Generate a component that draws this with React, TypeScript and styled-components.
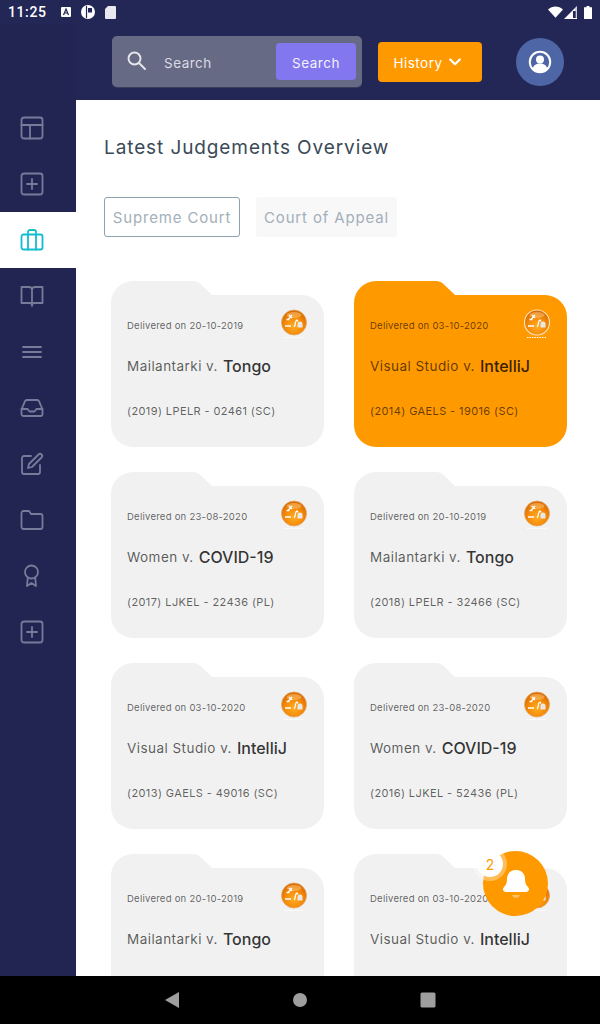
import React from "react";
import styled, { createGlobalStyle } from "styled-components";

const FONT = `Inter, "Open Sans", sans-serif`;

interface Judgement {
  date: string;
  left: string;
  right: string;
  ref?: string;
  active?: boolean;
}

const JUDGEMENTS: Judgement[] = [
  { date: "20-10-2019", left: "Mailantarki", right: "Tongo", ref: "(2019) LPELR - 02461 (SC)" },
  { date: "03-10-2020", left: "Visual Studio", right: "IntelliJ", ref: "(2014) GAELS - 19016 (SC)", active: true },
  { date: "23-08-2020", left: "Women", right: "COVID-19", ref: "(2017) LJKEL - 22436 (PL)" },
  { date: "20-10-2019", left: "Mailantarki", right: "Tongo", ref: "(2018) LPELR - 32466 (SC)" },
  { date: "03-10-2020", left: "Visual Studio", right: "IntelliJ", ref: "(2013) GAELS - 49016 (SC)" },
  { date: "23-08-2020", left: "Women", right: "COVID-19", ref: "(2016) LJKEL - 52436 (PL)" },
  { date: "20-10-2019", left: "Mailantarki", right: "Tongo" },
  { date: "03-10-2020", left: "Visual Studio", right: "IntelliJ" },
];

// Sidebar icons
const plusSquare = (
  <>
    <rect x="1.500" y="1.500" width="21" height="21" rx="2.500" />
    <path d="M12 7v10M7 12h10" />
  </>
);

const NAV_ICONS: React.ReactNode[] = [
  <>
    <rect x="1.500" y="1.500" width="21" height="21" rx="2.500" />
    <path d="M1.500 9h21M10 9v13.500" />
  </>,
  plusSquare,
  <>
    <rect x="1.500" y="6.500" width="21" height="15" rx="2" />
    <path d="M8 21.500V4a2 2 0 0 1 2-2h4a2 2 0 0 1 2 2v17.500" />
  </>,
  <path d="M12 6a3 3 0 0 0-3-3H1.500v16H10.500l1.500 1.500 1.500-1.500H22.500V3H15a3 3 0 0 0-3 3zM12 6v16" />,
  <path d="M3 7h18M3 12h18M3 17h18" />,
  <>
    <path d="M1.500 13.500 5 5.200A2 2 0 0 1 6.800 4h10.400A2 2 0 0 1 19 5.200l3.500 8.300V18a2 2 0 0 1-2 2H3.500a2 2 0 0 1-2-2z" />
    <path d="M1.500 13h6l2 2.500h5l2-2.500h6" />
  </>,
  <>
    <path d="M11 4H4a2 2 0 0 0-2 2v14a2 2 0 0 0 2 2h14a2 2 0 0 0 2-2v-7" />
    <path d="M18.500 2.500a2.121 2.121 0 0 1 3 3L12 15l-4 1 1-4z" />
  </>,
  <path d="M22.500 19a2 2 0 0 1-2 2H3.500a2 2 0 0 1-2-2V5a2 2 0 0 1 2-2h5.500l2 3h9.500a2 2 0 0 1 2 2z" />,
  <>
    <circle cx="11.500" cy="8" r="6.500" />
    <path d="M7.800 13.500 7 22l4.500-3 4.500 3-.8-8.500" />
  </>,
  plusSquare,
];

const ACTIVE_NAV = 2;

const GlobalStyle = createGlobalStyle`
  html, body {
    margin: 0;
    padding: 0;
    background: #fff;
  }
  * {
    box-sizing: border-box;
  }
`;

const Screen = styled.div`
  width: 600px;
  height: 1024px;
  display: flex;
  flex-direction: column;
  overflow: hidden;
  background: #232755;
  font-family: ${FONT};
`;

// Status bar
const StatusBar = styled.div`
  height: 24px;
  flex: none;
  display: flex;
  align-items: center;
  padding: 0 8px;
  color: #fff;
`;

const Clock = styled.span`
  font-family: Roboto, sans-serif;
  font-size: 14px;
  font-weight: 500;
  letter-spacing: 0.6px;
  margin-right: 14px;
`;

const StatusGroup = styled.div`
  display: flex;
  align-items: center;
  gap: 10px;
`;

const StatusRight = styled(StatusGroup)`
  margin-left: auto;
  gap: 1px;
`;

const SignalIcon = styled.svg`
  margin-right: 6px;
`;

// Body
const Body = styled.div`
  flex: 1;
  min-height: 0;
  display: flex;
`;

const Sidebar = styled.nav`
  width: 76px;
  flex: none;
  padding-top: 76px;
  background: #222552;
`;

const NavItem = styled.div<{ $active?: boolean }>`
  height: 56px;
  display: flex;
  align-items: center;
  padding-left: 20px;
  background: ${(p) => (p.$active ? "#fff" : "transparent")};
  color: ${(p) => (p.$active ? "#12bdd0" : "#777b9a")};

  & svg {
    width: 24px;
    height: 24px;
    fill: none;
    stroke: currentColor;
    stroke-width: 1.8;
    stroke-linecap: round;
    stroke-linejoin: round;
  }
`;

const Main = styled.div`
  flex: 1;
  min-width: 0;
  display: flex;
  flex-direction: column;
`;

// Header
const Header = styled.header`
  height: 76px;
  flex: none;
  display: flex;
  align-items: center;
  padding-left: 36px;
`;

const SearchBox = styled.div`
  width: 250px;
  height: 51px;
  margin-bottom: 1px;
  display: flex;
  align-items: center;
  padding: 0 6px 0 15px;
  border-radius: 5px;
  background: #676a85;
  box-shadow: 0 1px 0 #3a3c5c;
`;

const SearchGlyph = styled.svg`
  width: 19px;
  height: 19px;
  margin-top: -3px;
  fill: none;
  stroke: #e6e6ec;
  stroke-width: 1.9;
  stroke-linecap: round;
`;

const SearchLabel = styled.span`
  margin-left: 18px;
  padding-top: 2px;
  flex: 1;
  color: #dadbe3;
  font-size: 13.5px;
  letter-spacing: 0.5px;
`;

const SearchButton = styled.button`
  width: 80px;
  height: 37px;
  border: 0;
  padding: 2px 0 0;
  border-radius: 4px;
  background: #8277ee;
  color: #f2f1fd;
  font-family: ${FONT};
  font-size: 13.5px;
  letter-spacing: 0.5px;
`;

const HistoryButton = styled.button`
  width: 104px;
  height: 40px;
  margin-left: 16px;
  border: 0;
  padding: 2px 6px 0 0;
  display: flex;
  align-items: center;
  justify-content: center;
  gap: 6px;
  border-radius: 4px;
  background: #ff9900;
  color: #fff;
  font-family: ${FONT};
  font-size: 13.5px;
  letter-spacing: 0.5px;

  & svg {
    width: 12px;
    height: 8px;
    margin-top: -3px;
    fill: none;
    stroke: #fff;
    stroke-width: 2.2;
    stroke-linecap: round;
    stroke-linejoin: round;
  }
`;

const Avatar = styled.div`
  width: 48px;
  height: 48px;
  margin-left: 34px;
  display: flex;
  align-items: center;
  justify-content: center;
  border-radius: 50%;
  background: #4f66a6;

  & svg {
    width: 24px;
    height: 24px;
  }
`;

// Content
const Content = styled.main`
  flex: 1;
  min-height: 0;
  position: relative;
  overflow: hidden;
  background: #fff;
  padding: 35px 0 0 28px;
`;

const Title = styled.h1`
  margin: 0;
  height: 26px;
  color: #3a4a56;
  font-size: 19px;
  font-weight: 400;
  line-height: 26px;
  letter-spacing: 0.9px;
  white-space: nowrap;
`;

const Tabs = styled.div`
  display: flex;
  gap: 16px;
  margin-top: 36px;
`;

const Tab = styled.div<{ $selected?: boolean }>`
  height: 40px;
  display: flex;
  align-items: center;
  justify-content: center;
  width: ${(p) => (p.$selected ? "136px" : "141px")};
  border-radius: 3px;
  border: 1px solid ${(p) => (p.$selected ? "#8da1ae" : "#f8f8f8")};
  background: ${(p) => (p.$selected ? "#fff" : "#f8f8f8")};
  color: #a3afb9;
  font-size: 15px;
  letter-spacing: 0.85px;
  white-space: nowrap;
`;

const CardGrid = styled.div`
  display: grid;
  grid-template-columns: 213px 213px;
  grid-auto-rows: 166px;
  column-gap: 30px;
  row-gap: 25px;
  margin: 44px 0 0 7px;
`;

const Card = styled.article<{ $active?: boolean }>`
  padding: 29px 18px 0 16px;
  background: ${(p) => (p.$active ? "#ff9900" : "#f1f1f1")};
  clip-path: path("M0 36V22A22 22 0 0 1 22 0H82Q87 0 90 3.500L101 14H191A22 22 0 0 1 213 36V144A22 22 0 0 1 191 166H22A22 22 0 0 1 0 144Z");
`;

const CardTop = styled.div`
  height: 26px;
  display: flex;
  align-items: center;
  justify-content: space-between;
`;

const DateText = styled.span`
  color: rgba(0, 0, 0, 0.62);
  font-size: 9.5px;
  letter-spacing: 0.25px;
  padding-top: 4px;
  white-space: nowrap;
`;

const CardTitle = styled.div`
  margin-top: 18px;
  height: 24px;
  display: flex;
  align-items: center;
  gap: 5px;
  color: rgba(0, 0, 0, 0.64);
  font-size: 13.5px;
  letter-spacing: 0.45px;
  white-space: nowrap;
`;

const PartyName = styled.span`
  color: rgba(0, 0, 0, 0.8);
  font-size: 16px;
  font-weight: 500;
  letter-spacing: 0;
`;

const RefText = styled.div`
  margin-top: 26px;
  color: rgba(0, 0, 0, 0.62);
  font-size: 11px;
  letter-spacing: 0.4px;
  white-space: nowrap;
`;

// Floating bell
const Fab = styled.div`
  position: absolute;
  left: 407px;
  top: 751px;
  width: 65px;
  height: 65px;
  display: flex;
  align-items: center;
  justify-content: center;
  border-radius: 50%;
  background: #ff9900;

  & > svg {
    width: 28px;
    height: 31px;
    margin-top: 1px;
  }
`;

const FabCount = styled.span`
  position: absolute;
  left: -6px;
  top: 0;
  width: 26px;
  height: 26px;
  display: flex;
  align-items: center;
  justify-content: center;
  border-radius: 50%;
  background: #fff;
  box-shadow: 0 0 0 4px rgba(255, 255, 255, 0.35);
  color: #ff9900;
  font-size: 14px;
`;

// Android navigation bar
const NavBar = styled.div`
  height: 48px;
  flex: none;
  display: flex;
  align-items: center;
  justify-content: center;
  background: #000;
`;

const NavBarKey = styled.div`
  width: 128px;
  display: flex;
  justify-content: center;

  & svg {
    width: 16px;
    height: 16px;
    fill: #9e9e9e;
  }
`;

const BadgeIcon = styled.svg`
  width: 30px;
  height: 30px;
  margin: 2px -3px 0 0;
  flex: none;
`;

const CourtBadge = ({ active, id }: { active?: boolean; id: string }) => (
  <BadgeIcon viewBox="0 0 30 30">
    <defs>
      <radialGradient id={id} cx="50%" cy="65%" r="60%">
        <stop offset="0%" stopColor="#ffad24" />
        <stop offset="60%" stopColor="#f58a08" />
        <stop offset="100%" stopColor="#d96c04" />
      </radialGradient>
    </defs>
    <circle
      cx="15"
      cy="13.500"
      r="12.500"
      fill={`url(#${id})`}
      stroke={active ? "#ffe2b0" : "#e2a869"}
      strokeWidth={active ? 1.2 : 0.8}
    />
    <ellipse cx="15" cy="6" rx="7.500" ry="3" fill="#ffd08a" opacity="0.45" />
    <path
      d="M6 17h6M10 6l3 3M13 6l-3.500 4M10.500 10.500h-3M15 18c1.500-.5 1-4 2-6 .6-1.200 1.700-1 1.700.5"
      fill="none"
      stroke="#fff"
      strokeWidth="1.300"
    />
    <path d="M18.500 15a2.500 2.500 0 0 1 5 0v3.500h-5z" fill="#e8e8e8" />
    <path d="M5 28.500h20" stroke="#fff" strokeWidth="1" strokeDasharray="1.500 1" />
  </BadgeIcon>
);

const JudgementCard = ({ item, id }: { item: Judgement; id: string }) => (
  <Card $active={item.active}>
    <CardTop>
      <DateText>Delivered on {item.date}</DateText>
      <CourtBadge active={item.active} id={id} />
    </CardTop>
    <CardTitle>
      {item.left} v. <PartyName>{item.right}</PartyName>
    </CardTitle>
    {item.ref && <RefText>{item.ref}</RefText>}
  </Card>
);

const App = () => {
  return (
    <Screen>
      <GlobalStyle />
      <StatusBar>
        <Clock>11:25</Clock>
        <StatusGroup>
          <svg width="10" height="10" viewBox="0 0 10 10">
            <rect width="10" height="10" rx="1" fill="#fff" />
            <path d="M2.500 8 5 2l2.500 6M3.500 6h3" fill="none" stroke="#232755" strokeWidth="1.200" />
          </svg>
          <svg width="14" height="14" viewBox="0 0 14 14">
            <circle cx="7" cy="7" r="7" fill="#fff" />
            <path d="M5.500 1v12" stroke="#232755" strokeWidth="1.200" />
            <rect x="7" y="3" width="4" height="4.500" fill="#232755" />
          </svg>
          <svg width="11" height="13" viewBox="0 0 11 13">
            <path d="M3 0h7a1 1 0 0 1 1 1v11a1 1 0 0 1-1 1H1a1 1 0 0 1-1-1V3z" fill="#e8e8ee" />
          </svg>
        </StatusGroup>
        <StatusRight>
          <svg width="15" height="12" viewBox="0 0 16 12">
            <path d="M0 3.200C4.500-1 11.500-1 16 3.200L8 12z" fill="#fff" />
          </svg>
          <SignalIcon width="13" height="13" viewBox="0 0 13 13">
            <path d="M0 13 13 0v13z" fill="#fff" />
            <path d="M9 5h3v7H9z" fill="#232755" />
            <path d="M12 1v11" stroke="#9a9cb0" />
          </SignalIcon>
          <svg width="8" height="13" viewBox="0 0 8 13">
            <path d="M2.500 0h3v1.200H8V13H0V1.200h2.500z" fill="#fff" />
          </svg>
        </StatusRight>
      </StatusBar>
      <Body>
        <Sidebar>
          {NAV_ICONS.map((icon, i) => (
            <NavItem key={i} $active={i === ACTIVE_NAV}>
              <svg viewBox="0 0 24 24">{icon}</svg>
            </NavItem>
          ))}
        </Sidebar>
        <Main>
          <Header>
            <SearchBox>
              <SearchGlyph viewBox="0 0 19 19">
                <circle cx="7.500" cy="7.500" r="6" />
                <path d="M12 12l6 6" />
              </SearchGlyph>
              <SearchLabel>Search</SearchLabel>
              <SearchButton>Search</SearchButton>
            </SearchBox>
            <HistoryButton>
              History
              <svg viewBox="0 0 12 8">
                <path d="M1.200 1.500 6 6.200l4.800-4.700" />
              </svg>
            </HistoryButton>
            <Avatar>
              <svg viewBox="0 0 24 24">
                <circle cx="12" cy="12" r="10.200" fill="none" stroke="#fff" strokeWidth="2" />
                <circle cx="12" cy="9.500" r="4" fill="#fff" />
                <path d="M4.500 19c1-4 4-5.500 7.500-5.500s6.500 1.500 7.500 5.500a10 10 0 0 1-15 0z" fill="#fff" />
              </svg>
            </Avatar>
          </Header>
          <Content>
            <Title>Latest Judgements Overview</Title>
            <Tabs>
              <Tab $selected>Supreme Court</Tab>
              <Tab>Court of Appeal</Tab>
            </Tabs>
            <CardGrid>
              {JUDGEMENTS.map((item, i) => (
                <JudgementCard key={i} item={item} id={`badge-${i}`} />
              ))}
            </CardGrid>
            <Fab>
              <FabCount>2</FabCount>
              <svg viewBox="0 0 28 31">
                <path d="M14 1c6 0 9 4 9 9 0 4 1 6 3 8 2 2 1 5-2 5H4c-3 0-4-3-2-5 2-2 3-4 3-8 0-5 3-9 9-9z" fill="#fff" />
                <path d="M10 26h8c-.8 2-2.300 3-4 3s-3.200-1-4-3z" fill="#ffc266" />
              </svg>
            </Fab>
          </Content>
        </Main>
      </Body>
      <NavBar>
        <NavBarKey>
          <svg viewBox="0 0 16 16">
            <path d="M15 0v16L1 8z" />
          </svg>
        </NavBarKey>
        <NavBarKey>
          <svg viewBox="0 0 16 16">
            <circle cx="8" cy="8" r="7" />
          </svg>
        </NavBarKey>
        <NavBarKey>
          <svg viewBox="0 0 16 16">
            <rect x="0.500" y="0.500" width="15" height="15" rx="1.500" />
          </svg>
        </NavBarKey>
      </NavBar>
    </Screen>
  );
};

export default App;
